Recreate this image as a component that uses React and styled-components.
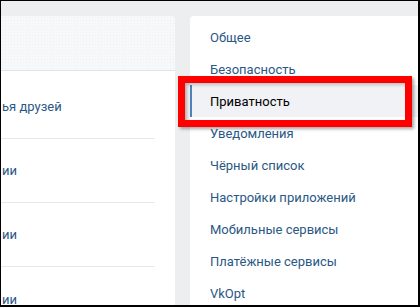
import React from "react";
import styled, { createGlobalStyle } from "styled-components";

const GlobalStyle = createGlobalStyle`
  html, body {
    margin: 0;
    padding: 0;
    background: #edeef0;
  }
  * {
    box-sizing: border-box;
  }
`;

const Frame = styled.div`
  width: 420px;
  height: 307px;
  overflow: hidden;
  display: flex;
  gap: 15px;
  padding-top: 15px;
  background: #edeef0;
  border: 1px solid #000;
  border-right-width: 2px;
  border-bottom-width: 2px;
  font-family: Roboto, "Open Sans", "Liberation Sans", sans-serif;
  font-size: 13px;
`;

const MainCard = styled.section`
  width: 174px;
  flex-shrink: 0;
  background: #fff;
  border-radius: 0 4px 0 0;
  overflow: hidden;
`;

const CardHeader = styled.div`
  height: 55px;
  background-color: #f7f8fa;
  background-image: radial-gradient(#eef0f3 0.8px, transparent 0.9px);
  background-size: 3px 3px;
  border-bottom: 1px solid #e2e4e8;
`;

const RowList = styled.div`
  padding-top: 4px;
`;

const Row = styled.div`
  height: 64px;
  margin-right: 20px;
  display: flex;
  align-items: center;
  padding-left: 1px;
  border-bottom: ${(p) => (p.$last ? "none" : "1px solid #e7e8ec")};
  white-space: nowrap;
`;

const RowLabel = styled.span`
  color: #2a5885;
`;

const MenuCard = styled.nav`
  flex: 1;
  background: #fff;
  border-radius: 4px 0 0 0;
  padding-top: 5px;
`;

const MenuItem = styled.div`
  position: relative;
  height: 32px;
  display: flex;
  align-items: center;
  padding-left: 20px;
  color: ${(p) => (p.$active ? "#000" : "#2a5885")};
  background: ${(p) => (p.$active ? "#f0f2f5" : "transparent")};
  box-shadow: ${(p) => (p.$active ? "inset 2px 0 0 #5181b8" : "none")};
  white-space: nowrap;
`;

const Highlight = styled.div`
  position: absolute;
  left: -12px;
  top: -9px;
  width: 234px;
  height: 51px;
  border: 7px solid #f00;
  box-shadow: 2px 2px 3px rgba(0, 0, 0, 0.35),
    inset 2px 2px 3px rgba(0, 0, 0, 0.25);
  pointer-events: none;
`;

const rows = [
  { label: "ья друзей" },
  { label: "ии" },
  { label: "ии" },
  { label: "ии", last: true },
];

const menu = [
  "Общее",
  "Безопасность",
  "Приватность",
  "Уведомления",
  "Чёрный список",
  "Настройки приложений",
  "Мобильные сервисы",
  "Платёжные сервисы",
  "VkOpt",
];

export default function App() {
  return (
    <>
      <GlobalStyle />
      <Frame>
        <MainCard>
          <CardHeader />
          <RowList>
            {rows.map((r, i) => (
              <Row key={i} $last={r.last}>
                <RowLabel>{r.label}</RowLabel>
              </Row>
            ))}
          </RowList>
        </MainCard>
        <MenuCard>
          {menu.map((item) => (
            <MenuItem key={item} $active={item === "Приватность"}>
              {item}
              {item === "Приватность" && <Highlight />}
            </MenuItem>
          ))}
        </MenuCard>
      </Frame>
    </>
  );
}
